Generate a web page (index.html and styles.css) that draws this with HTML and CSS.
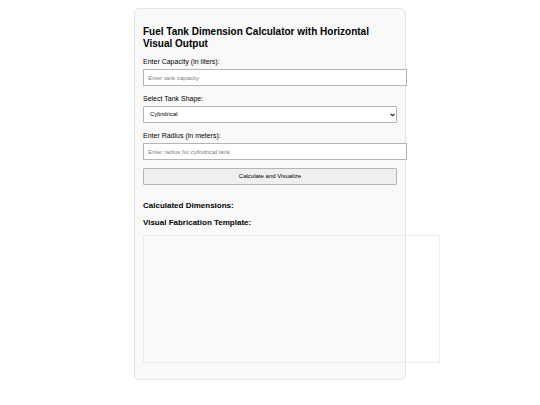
FILE: index.html
```html
<!DOCTYPE html>
<html lang="en">
<head>
  <meta charset="UTF-8">
  <meta name="viewport" content="width=device-width, initial-scale=1.0">
  <title>Fuel Tank Dimension Calculator</title>
  <link rel="stylesheet" href="styles.css">
</head>
<body>
  <div class="container">
    <h2>Fuel Tank Dimension Calculator with Horizontal Visual Output</h2>

    <label for="capacity">Enter Capacity (in liters):</label>
    <input type="number" id="capacity" placeholder="Enter tank capacity">

    <label for="shape">Select Tank Shape:</label>
    <div class="select-wrap">
      <select id="shape">
        <option value="cylindrical">Cylindrical</option>
        <option value="rectangular">Rectangular</option>
      </select>
      <svg class="arrow" viewBox="0 0 5 4" aria-hidden="true">
        <path d="M0.6 0.8 L2.5 2.7 L4.4 0.8" fill="none" stroke="#222" stroke-width="1.1"/>
      </svg>
    </div>

    <label for="radius">Enter Radius (in meters):</label>
    <input type="number" id="radius" placeholder="Enter radius for cylindrical tank">

    <button type="button">Calculate and Visualize</button>

    <div class="result">
      <h3>Calculated Dimensions:</h3>
      <h3>Visual Fabrication Template:</h3>
      <canvas id="tankCanvas" width="295" height="126"></canvas>
    </div>
  </div>
</body>
</html>
```

FILE: styles.css
```css
body {
  font-family: Arial, "Liberation Sans", sans-serif;
  margin: 8px;
  background: #fff;
  color: #000;
}

.container {
  max-width: 254px;
  margin: 0 auto;
  padding: 8px;
  background-color: #f9f9f9;
  border: 1px solid #e4e4e4;
  border-radius: 5px;
}

h2 {
  margin: 9px 0 8px;
  font-size: 10px;
  line-height: 12px;
}

label {
  display: block;
  padding-top: 1px;
  margin-bottom: 3px;
  font-size: 7px;
  line-height: 8px;
}

h2 + label {
  padding-top: 0;
}

input, select, button {
  display: block;
  width: 100%;
  height: 17px;
  margin: 0 0 8px;
  padding: 4px;
  font-family: inherit;
  font-size: 6px;
  line-height: 7px;
  border: 1px solid #b5b5b5;
}

input {
  box-sizing: content-box;
  height: 7px;
  padding: 5px 4px 3px;
  background: #fff;
}

input::placeholder {
  color: #808080;
}

.select-wrap {
  position: relative;
}

select {
  appearance: none;
  padding: 0 12px 0 6px;
  background: #fff;
  color: #000;
  border-radius: 1px;
}

.arrow {
  position: absolute;
  top: 7px;
  right: 2px;
  width: 5px;
  height: 4px;
  pointer-events: none;
}

button {
  background: #efefef;
  color: #000;
  border-radius: 1px;
}

.result {
  margin-top: 16px;
}

h3 {
  margin: 0 0 7px;
  font-size: 8px;
  line-height: 10px;
}

canvas {
  display: block;
  margin: 7px 0 8px;
  border: 1px solid #ececec;
}
```
